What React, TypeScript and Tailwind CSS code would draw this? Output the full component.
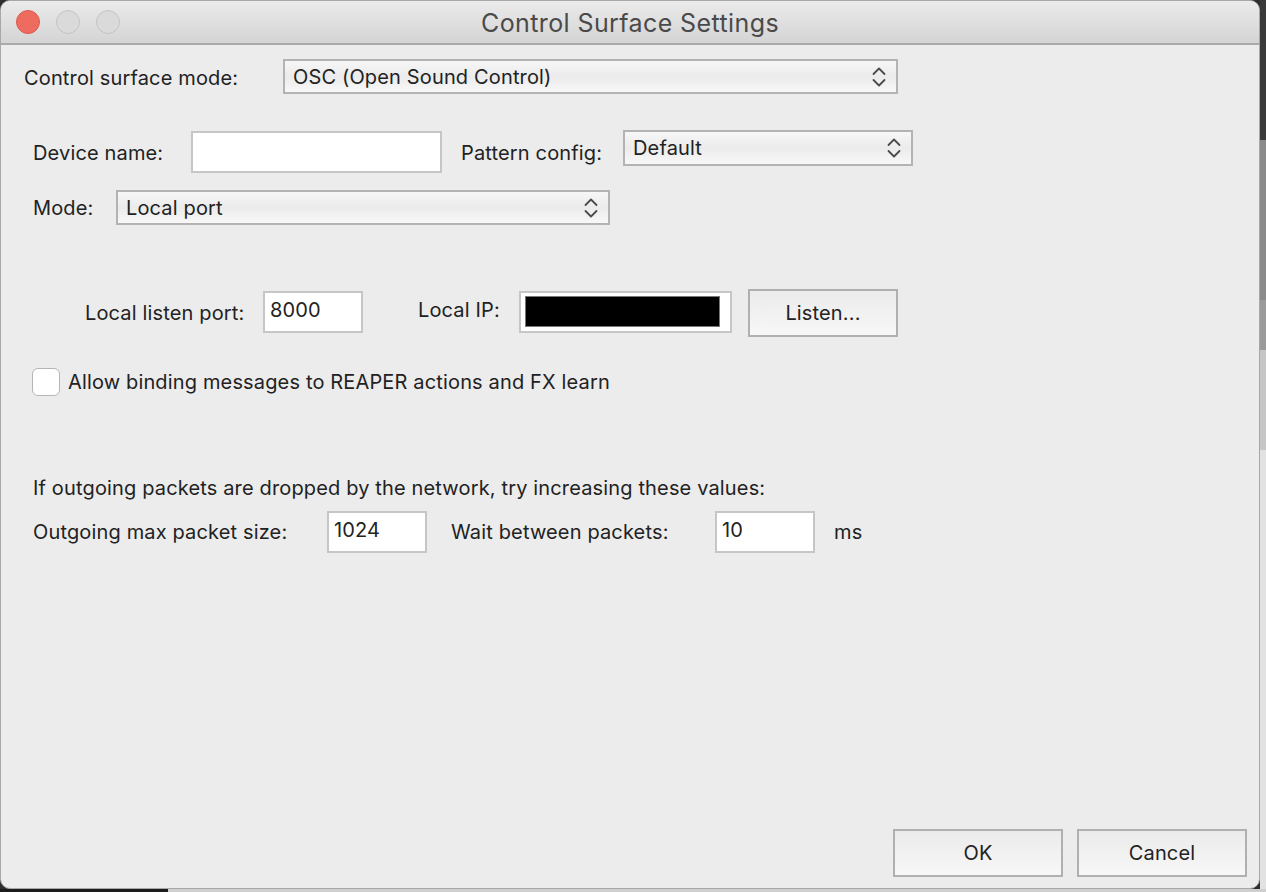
import React from 'react'

const font = { fontFamily: 'Inter, "Liberation Sans", sans-serif' }

function Chevrons() {
  return (
    <svg width="16" height="22" viewBox="0 0 16 22" fill="none" stroke="#4a4a4a" strokeWidth="1.8" strokeLinecap="round" strokeLinejoin="round">
      <path d="M2.5 8 L8 2.5 L13.5 8" />
      <path d="M2.5 14 L8 19.5 L13.5 14" />
    </svg>
  )
}

function Select({ value, className }: { value: string; className: string }) {
  return (
    <div
      className={`flex items-center justify-between border-2 border-[#b3b3b3] bg-gradient-to-b from-[#f7f7f7] via-[#ebebeb] to-[#f8f8f8] pl-[8px] pr-[9px] ${className}`}
    >
      <span className="text-[#222]">{value}</span>
      <Chevrons />
    </div>
  )
}

function Field({ value, className }: { value?: string; className: string }) {
  return (
    <div className={`border-2 border-[#c6c6c6] bg-white pl-[5px] leading-[34px] text-[#222] ${className}`}>
      {value}
    </div>
  )
}

function Button({ label, className }: { label: string; className: string }) {
  return (
    <div
      className={`flex items-center justify-center border-2 border-[#b0b0b0] bg-gradient-to-b from-[#ebebeb] to-[#f7f7f7] text-[#222] ${className}`}
    >
      {label}
    </div>
  )
}

export default function App() {
  return (
    <div className="relative h-[892px] w-[1266px] overflow-hidden bg-[#2e2e2e]" style={font}>
      <div className="flex">
        <div className="flex h-[889px] w-[1260px] flex-col overflow-hidden rounded-[10px] border border-[#a8a8a8] bg-[#ececec] text-[#222]">
          {/* title bar */}
          <div className="relative flex h-[44px] shrink-0 items-center justify-center border-b-2 border-[#aaaaaa] bg-gradient-to-b from-[#ebebeb] to-[#d4d4d4] pt-[3px]">
            <div className="absolute left-[15px] top-[9px] flex gap-[16px]">
              <div className="h-[24px] w-[24px] rounded-full border border-[#dc5a50] bg-[#ee6b60]" />
              <div className="h-[24px] w-[24px] rounded-full border border-[#c4c4c4] bg-[#dadada]" />
              <div className="h-[24px] w-[24px] rounded-full border border-[#c4c4c4] bg-[#dadada]" />
            </div>
            <span className="text-[25px] tracking-[0.4px] text-[#4a4a4a]">Control Surface Settings</span>
          </div>

          <div className="flex flex-1 flex-col text-[20px] tracking-[0.15px]">
            {/* surface mode */}
            <div className="mt-[14px] flex items-center pl-[23px]">
              <span className="mt-[3px] w-[259px]">Control surface mode:</span>
              <Select value="OSC (Open Sound Control)" className="h-[35px] w-[615px]" />
            </div>

            {/* device name / pattern config */}
            <div className="mt-[36px] flex items-start pl-[32px]">
              <span className="mt-[8px] w-[158px]">Device name:</span>
              <Field className="mt-[1px] h-[42px] w-[251px]" />
              <span className="ml-[19px] mt-[8px] w-[162px]">Pattern config:</span>
              <Select value="Default" className="h-[36px] w-[290px]" />
            </div>

            {/* mode */}
            <div className="mt-[17px] flex items-center pl-[32px]">
              <span className="w-[83px]">Mode:</span>
              <Select value="Local port" className="h-[35px] w-[494px]" />
            </div>

            {/* port / ip */}
            <div className="mt-[64px] flex items-center pl-[84px]">
              <span className="w-[178px]">Local listen port:</span>
              <Field value="8000" className="mb-[3px] h-[42px] w-[100px]" />
              <span className="mb-[7px] ml-[55px] w-[101px]">Local IP:</span>
              <div className="mb-[3px] h-[42px] w-[213px] border-2 border-[#c6c6c6] bg-white pl-[4px] pt-[3px]">
                <div className="h-[31px] w-[195px] border border-[#777] bg-black" />
              </div>
              <Button label="Listen..." className="ml-[16px] h-[48px] w-[150px]" />
            </div>

            {/* checkbox */}
            <div className="mt-[30px] flex items-center pl-[31px]">
              <div className="h-[28px] w-[28px] rounded-[6px] border border-[#b5b5b5] bg-white" />
              <span className="ml-[8px]">Allow binding messages to REAPER actions and FX learn</span>
            </div>

            {/* packets */}
            <div className="mt-[79px] pl-[32px] leading-[24px]">
              If outgoing packets are dropped by the network, try increasing these values:
            </div>
            <div className="mt-[11px] flex items-center pl-[32px]">
              <span className="w-[294px]">Outgoing max packet size:</span>
              <Field value="1024" className="h-[42px] w-[100px]" />
              <span className="ml-[24px] w-[264px]">Wait between packets:</span>
              <Field value="10" className="h-[42px] w-[100px]" />
              <span className="ml-[19px]">ms</span>
            </div>

            {/* buttons */}
            <div className="mt-auto mb-[11px] flex justify-end gap-[14px] pr-[12px]">
              <Button label="OK" className="h-[48px] w-[170px]" />
              <Button label="Cancel" className="h-[48px] w-[170px]" />
            </div>
          </div>
        </div>

        {/* background app strip on the right */}
        <div className="flex h-[889px] w-[6px] flex-col">
          <div className="h-[140px] bg-[#3a3a3a]" />
          <div className="h-[160px] bg-[#8a8a8a]" />
          <div className="h-[50px] bg-[#9a9a9a]" />
          <div className="h-[100px] bg-[#c6c6c6]" />
          <div className="flex-1 bg-[#e2e2e2]" />
        </div>
      </div>
      {/* strip below the window */}
      <div className="flex h-[3px]">
        <div className="w-[168px] bg-[#1c1c1c]" />
        <div className="flex-1 bg-[#cfcfcf]" />
      </div>
    </div>
  )
}
